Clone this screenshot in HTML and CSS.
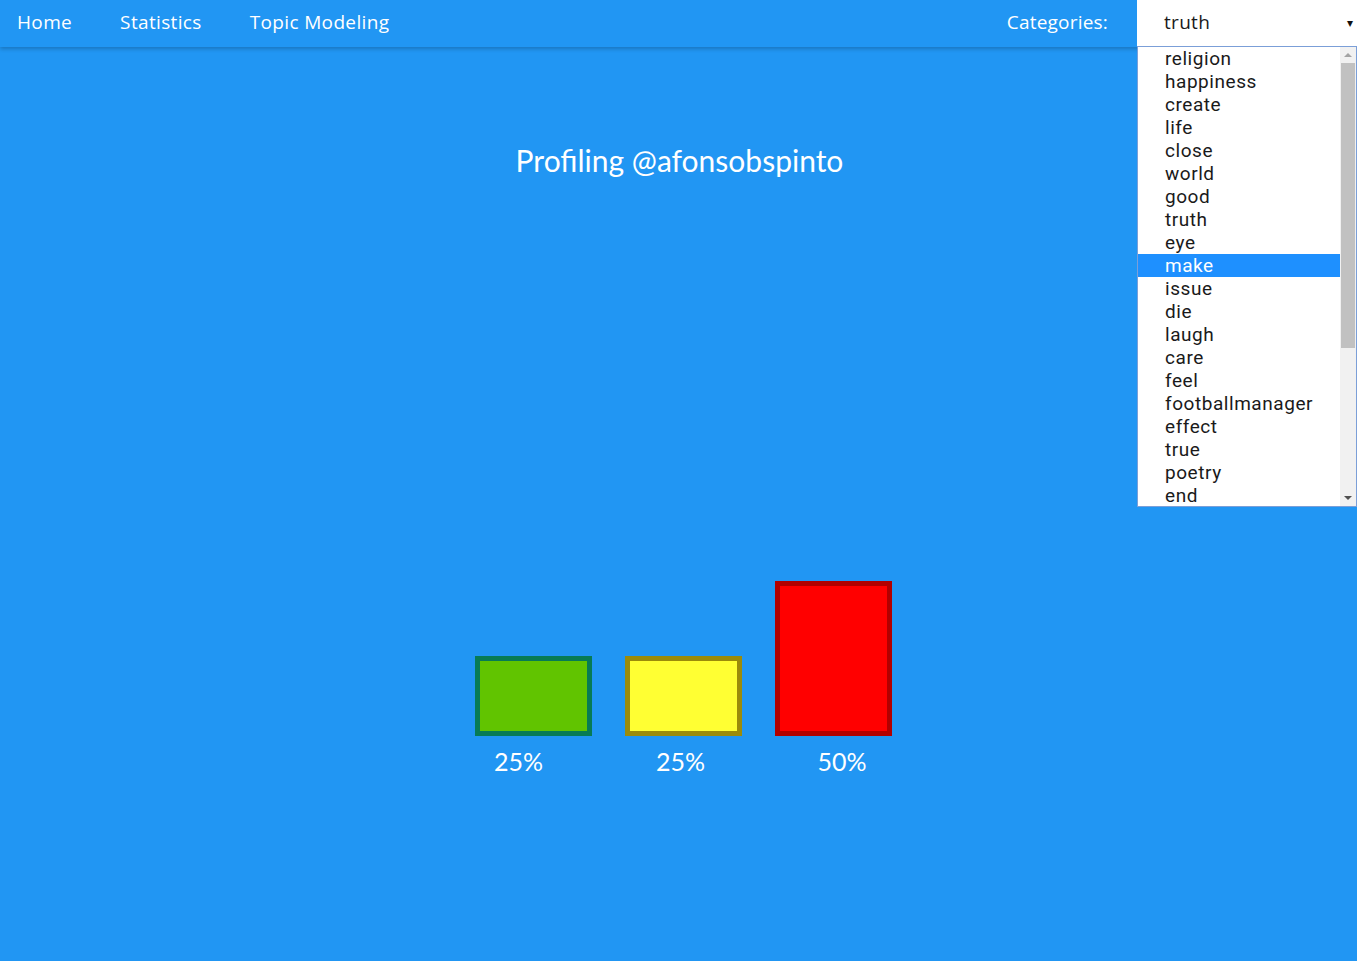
FILE: index.html
```html
<!DOCTYPE html>
<html>
<head>
<meta charset="utf-8">
<link rel="stylesheet" href="styles.css">
</head>
<body>
<nav class="topnav">
  <div class="links">
    <a class="link">Home</a>
    <a class="link">Statistics</a>
    <a class="link">Topic Modeling</a>
  </div>
  <div class="cats">
    <span class="cat-label">Categories:</span>
    <div class="select">
      <span class="select-value">truth</span>
      <span class="caret">▾</span>
      <div class="listbox">
        <ul class="options">
          <li>religion</li>
          <li>happiness</li>
          <li>create</li>
          <li>life</li>
          <li>close</li>
          <li>world</li>
          <li>good</li>
          <li>truth</li>
          <li>eye</li>
          <li class="active">make</li>
          <li>issue</li>
          <li>die</li>
          <li>laugh</li>
          <li>care</li>
          <li>feel</li>
          <li>footballmanager</li>
          <li>effect</li>
          <li>true</li>
          <li>poetry</li>
          <li>end</li>
        </ul>
        <div class="scrollbar">
          <span class="sb-up"></span>
          <span class="sb-thumb"></span>
          <span class="sb-down"></span>
        </div>
      </div>
    </div>
  </div>
</nav>
<main class="content">
  <h1 class="title">Profiling @afonsobspinto</h1>
  <div class="chart">
    <div class="bar-col">
      <div class="bar green" style="height:80px"></div>
      <span class="pct off1">25%</span>
    </div>
    <div class="bar-col">
      <div class="bar yellow" style="height:80px"></div>
      <span class="pct off2">25%</span>
    </div>
    <div class="bar-col">
      <div class="bar red" style="height:155px"></div>
      <span class="pct off3">50%</span>
    </div>
  </div>
</main>
</body>
</html>
```
FILE: styles.css
```css
* { box-sizing: border-box; }
html, body { margin: 0; padding: 0; }
body {
  background: #2196f3;
  height: 961px;
  overflow: hidden;
  font-family: "Open Sans", "Noto Sans", sans-serif;
  color: #fff;
}
.topnav {
  height: 47px;
  display: flex;
  justify-content: space-between;
  align-items: stretch;
  background: #2196f3;
  box-shadow: 0 2px 4px rgba(0,0,0,0.22);
  position: relative;
  z-index: 2;
}
.links { display: flex; align-items: center; padding-left: 17px; padding-bottom: 3px; gap: 48px; }
.link { font-size: 19px; color: #fff; letter-spacing: 0.35px; }
.cats { display: flex; align-items: stretch; }
.cat-label { font-size: 19px; display: flex; align-items: center; padding-bottom: 3px; padding-right: 29px; letter-spacing: 0.2px; }
.select {
  position: relative;
  width: 220px;
  height: 46px;
  background: #fff;
  color: #1a1a1a;
  display: flex;
  align-items: center;
  padding-left: 27px;
  padding-bottom: 2px;
  font-size: 19px;
}
.select-value { flex: 1; letter-spacing: 0.3px; }
.caret { font-size: 12px; padding-right: 4px; color: #111; }
.listbox {
  position: absolute;
  left: 0;
  top: 46px;
  width: 220px;
  height: 461px;
  background: #fff;
  border: 1px solid #7b9fd8;
  display: flex;
}
.options {
  list-style: none;
  margin: 0;
  padding: 0;
  flex: 1;
  font-family: Roboto, "Open Sans", sans-serif;
}
.options li {
  height: 23px;
  line-height: 23px;
  padding-left: 27px;
  font-size: 19px;
  color: #1a1a1a;
  letter-spacing: 0.55px;
}
.options li.active { background: #1e90ff; color: #fff; }
.scrollbar {
  width: 16px;
  background: #f1f1f1;
  display: flex;
  flex-direction: column;
  align-items: center;
}
.sb-up, .sb-down { width: 0; height: 0; border-left: 4px solid transparent; border-right: 4px solid transparent; margin: 6px 0; }
.sb-up { border-bottom: 4px solid #a3a3a3; }
.sb-down { border-top: 4px solid #505050; margin-top: auto; }
.sb-thumb { width: 14px; height: 285px; background: #c1c1c1; margin-top: 0; }
.content { display: flex; flex-direction: column; align-items: center; }
.title {
  font-family: Lato, sans-serif;
  font-weight: 400;
  font-size: 30px;
  margin: 94px 0 0;
  padding-left: 2px;
  line-height: 38px;
}
.chart {
  display: flex;
  align-items: flex-end;
  gap: 33px;
  margin-top: 402px;
  padding-left: 10px;
}
.bar-col { display: flex; flex-direction: column; align-items: center; width: 117px; }
.bar { width: 117px; border: 5px solid; }
.green { background: #61c400; border-color: #077b55; }
.yellow { background: #ffff33; border-color: #9b8b0a; }
.red { background: #ff0000; border-color: #b20000; }
.pct { font-family: Lato, sans-serif; font-size: 25px; margin-top: 10px; line-height: 30px; }
.off1 { margin-right: 30px; }
.off2 { margin-right: 6px; }
.off3 { margin-left: 17px; }
```
